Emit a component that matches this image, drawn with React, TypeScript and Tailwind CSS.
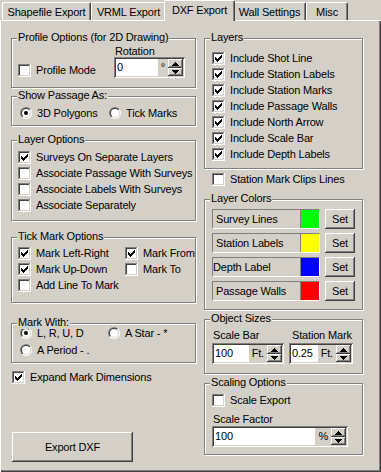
import type { ReactNode } from 'react';

const raised =
  'bg-[#d4d0c8] shadow-[inset_-1px_-1px_0_#404040,inset_1px_1px_0_#fff,inset_-2px_-2px_0_#808080,inset_2px_2px_0_#d4d0c8]';
const sunken =
  'shadow-[inset_1px_1px_0_#808080,inset_-1px_-1px_0_#fff,inset_2px_2px_0_#404040,inset_-2px_-2px_0_#d4d0c8]';

// column offsets of the classic 7x7 check glyph
const CHECK: [number, number][] = [
  [0, 2],
  [1, 3],
  [2, 4],
  [3, 3],
  [4, 2],
  [5, 1],
  [6, 0],
];

function CheckBox({ checked }: { checked?: boolean }) {
  return (
    <svg width="13" height="13" viewBox="0 0 13 13" shapeRendering="crispEdges" className="shrink-0">
      <rect x="0" y="0" width="13" height="13" fill="#fff" />
      <rect x="0" y="0" width="12" height="1" fill="#808080" />
      <rect x="0" y="0" width="1" height="12" fill="#808080" />
      <rect x="1" y="1" width="10" height="1" fill="#404040" />
      <rect x="1" y="1" width="1" height="10" fill="#404040" />
      <rect x="1" y="11" width="11" height="1" fill="#d4d0c8" />
      <rect x="11" y="1" width="1" height="11" fill="#d4d0c8" />
      {checked &&
        CHECK.map(([x, y]) => <rect key={x} x={3 + x} y={3 + y} width="1" height="3" fill="#000" />)}
    </svg>
  );
}

function RadioDot({ checked }: { checked?: boolean }) {
  return (
    <svg width="12" height="12" viewBox="0 0 12 12" className="shrink-0">
      <defs>
        <linearGradient id="rOuter" x1="0" y1="0" x2="1" y2="1">
          <stop offset="0.5" stopColor="#808080" />
          <stop offset="0.5" stopColor="#ffffff" />
        </linearGradient>
        <linearGradient id="rInner" x1="0" y1="0" x2="1" y2="1">
          <stop offset="0.5" stopColor="#404040" />
          <stop offset="0.5" stopColor="#d4d0c8" />
        </linearGradient>
      </defs>
      <circle cx="6" cy="6" r="6" fill="url(#rOuter)" />
      <circle cx="6" cy="6" r="5" fill="url(#rInner)" />
      <circle cx="6" cy="6" r="4" fill="#fff" />
      {checked && <circle cx="6" cy="6" r="2" fill="#000" />}
    </svg>
  );
}

function Check({ label, checked = false, className = '' }: { label: string; checked?: boolean; className?: string }) {
  return (
    <div className={`flex h-[13px] items-center gap-[5px] whitespace-nowrap leading-[13px] ${className}`}>
      <CheckBox checked={checked} />
      <span>{label}</span>
    </div>
  );
}

function Radio({ label, checked = false }: { label: string; checked?: boolean }) {
  return (
    <div className="flex h-[12px] items-center gap-[5px] whitespace-nowrap leading-[12px]">
      <RadioDot checked={checked} />
      <span>{label}</span>
    </div>
  );
}

function Group({ label, className = '', children }: { label: string; className?: string; children?: ReactNode }) {
  return (
    <div className={`relative border border-[#808080] shadow-[1px_1px_0_#fff,inset_1px_1px_0_#fff] ${className}`}>
      <span className="absolute -top-[8px] left-[5px] bg-[#d4d0c8] px-[1px] leading-[13px] whitespace-nowrap">
        {label}
      </span>
      {children}
    </div>
  );
}

function Arrow({ up }: { up?: boolean }) {
  return (
    <svg width="7" height="4" viewBox="0 0 7 4" shapeRendering="crispEdges">
      {up ? (
        <>
          <rect x="3" y="0" width="1" height="1" />
          <rect x="2" y="1" width="3" height="1" />
          <rect x="1" y="2" width="5" height="1" />
          <rect x="0" y="3" width="7" height="1" />
        </>
      ) : (
        <>
          <rect x="0" y="0" width="7" height="1" />
          <rect x="1" y="1" width="5" height="1" />
          <rect x="2" y="2" width="3" height="1" />
          <rect x="3" y="3" width="1" height="1" />
        </>
      )}
    </svg>
  );
}

function SpinField({ value, unit, className = '' }: { value: string; unit?: string; className?: string }) {
  return (
    <div className={`flex h-[21px] bg-white p-[2px] ${sunken} ${className}`}>
      <span className="flex-1 pl-[1px] leading-[17px]">{value}</span>
      {unit && <span className="bg-[#d4d0c8] px-[3px] leading-[17px]">{unit}</span>}
      <div className="flex w-[15px] flex-col">
        <div className={`flex h-[9px] items-center justify-center ${raised}`}>
          <Arrow up />
        </div>
        <div className={`flex h-[8px] items-center justify-center ${raised}`}>
          <Arrow />
        </div>
      </div>
    </div>
  );
}

function ColorRow({ label, swatch, tight }: { label: string; swatch: string; tight?: boolean }) {
  return (
    <div className="flex gap-[5px]">
      <div className="flex h-[20px] w-[108px] border border-[#808080] border-r-white border-b-white">
        <span className={`flex-1 leading-[18px] ${tight ? 'pl-0' : 'pl-[3px]'}`}>{label}</span>
        <span className={`w-[19px] border-l border-[#808080] ${swatch}`} />
      </div>
      <button className={`h-[20px] w-[30px] leading-[20px] ${raised}`}>Set</button>
    </div>
  );
}

export default function App() {
  return (
    <div className="flex h-[472px] w-[381px] flex-col bg-[#d4d0c8] font-['Liberation_Sans',Arial,sans-serif] text-[11px] tracking-[-0.17px] text-black">
      {/* tab strip */}
      <div className="relative z-10 flex h-[20px] items-start pl-[2px]">
        <div className="mt-[2px] flex h-[18px] w-[89px] items-center justify-center rounded-t-[2px] border-t border-l border-r border-white border-r-[#404040] pt-[1px] shadow-[inset_-1px_0_0_#808080]">
          Shapefile Export
        </div>
        <div className="mt-[2px] flex h-[18px] w-[75px] items-center justify-center rounded-t-[2px] border-t border-l border-r border-white border-r-[#404040] pt-[1px] shadow-[inset_-1px_0_0_#808080]">
          VRML Export
        </div>
        <div className="relative z-10 -mx-[2px] flex h-[21px] w-[71px] items-center justify-center rounded-t-[2px] border-t border-l border-r border-white border-r-[#404040] bg-[#d4d0c8] pb-[1px] shadow-[inset_-1px_0_0_#808080]">
          DXF Export
        </div>
        <div className="mt-[2px] flex h-[18px] w-[73px] items-center justify-center rounded-t-[2px] border-t border-l border-r border-white border-r-[#404040] pt-[1px] shadow-[inset_-1px_0_0_#808080]">
          Wall Settings
        </div>
        <div className="mt-[2px] flex h-[18px] w-[42px] items-center justify-center rounded-t-[2px] border-t border-l border-r border-white border-r-[#404040] pt-[1px] shadow-[inset_-1px_0_0_#808080]">
          Misc
        </div>
      </div>

      {/* panel */}
      <div className="flex flex-1 gap-[8px] pl-[11px] pt-[18px] shadow-[inset_1px_1px_0_#fff,inset_-1px_-1px_0_#404040,inset_-2px_-2px_0_#808080]">
        {/* left column */}
        <div className="flex w-[185px] flex-col">
          <Group label="Profile Options (for 2D Drawing)" className="h-[50px]">
            <div className="flex pl-[6px] pt-[6px]">
              <Check label="Profile Mode" className="mt-[19px]" />
              <div className="ml-auto mr-[10px] flex w-[71px] flex-col">
                <span className="h-[12px] pl-[1px] leading-[12px]">Rotation</span>
                <SpinField value="0" unit="°" />
              </div>
            </div>
          </Group>

          <Group label="Show Passage As:" className="mt-[8px] h-[30px]">
            <div className="grid grid-cols-[89px_1fr] pl-[8px] pt-[10px]">
              <Radio label="3D Polygons" checked />
              <Radio label="Tick Marks" />
            </div>
          </Group>

          <Group label="Layer Options" className="mt-[14px] h-[81px]">
            <div className="flex flex-col gap-[3px] pl-[6px] pt-[10px]">
              <Check label="Surveys On Separate Layers" checked />
              <Check label="Associate Passage With Surveys" />
              <Check label="Associate Labels With Surveys" />
              <Check label="Associate Separately" />
            </div>
          </Group>

          <Group label="Tick Mark Options" className="mt-[16px] h-[66px]">
            <div className="grid grid-cols-[107px_1fr] gap-y-[3px] pl-[6px] pt-[9px]">
              <Check label="Mark Left-Right" checked />
              <Check label="Mark From" checked />
              <Check label="Mark Up-Down" checked />
              <Check label="Mark To" />
              <Check label="Add Line To Mark" />
            </div>
          </Group>

          <Group label="Mark With:" className="mt-[20px] h-[40px]">
            <div className="grid grid-cols-[88px_1fr] gap-y-[5px] pl-[8px] pt-[3px]">
              <Radio label="L, R, U, D" checked />
              <Radio label="A Star - *" />
              <Radio label="A Period - ." />
            </div>
          </Group>

          <Check label="Expand Mark Dimensions" checked className="ml-[1px] mt-[8px]" />

          <button className={`ml-[1px] mt-[48px] h-[30px] w-[121px] ${raised}`}>Export DXF</button>
        </div>

        {/* right column */}
        <div className="flex w-[159px] flex-col">
          <Group label="Layers" className="h-[131px]">
            <div className="flex flex-col gap-[3px] pl-[7px] pt-[13px]">
              <Check label="Include Shot Line" checked />
              <Check label="Include Station Labels" checked />
              <Check label="Include Station Marks" checked />
              <Check label="Include Passage Walls" checked />
              <Check label="Include North Arrow" checked />
              <Check label="Include Scale Bar" checked />
              <Check label="Include Depth Labels" checked />
            </div>
          </Group>

          <Check label="Station Mark Clips Lines" className="ml-[8px] mt-[4px]" />

          <Group label="Layer Colors" className="mt-[13px] h-[111px]">
            <div className="flex flex-col gap-[4px] pl-[7px] pt-[9px]">
              <ColorRow label="Survey Lines" swatch="bg-[#00ff00]" />
              <ColorRow label="Station Labels" swatch="bg-[#ffff00]" />
              <ColorRow label="Depth Label" swatch="bg-[#0000ff]" tight />
              <ColorRow label="Passage Walls" swatch="bg-[#ff0000]" />
            </div>
          </Group>

          <Group label="Object Sizes" className="mt-[9px] h-[55px]">
            <div className="flex gap-[5px] pl-[7px] pt-[9px]">
              <div className="flex w-[72px] flex-col">
                <span className="h-[14px] whitespace-nowrap pl-[1px] leading-[13px]">Scale Bar</span>
                <SpinField value="100" unit="Ft." />
              </div>
              <div className="flex w-[64px] flex-col">
                <span className="h-[14px] whitespace-nowrap pl-[3px] leading-[13px]">Station Mark</span>
                <SpinField value="0.25" unit="Ft." />
              </div>
            </div>
          </Group>

          <Group label="Scaling Options" className="mt-[9px] h-[72px]">
            <div className="flex flex-col pl-[7px] pt-[10px]">
              <Check label="Scale Export" />
              <span className="mt-[6px] h-[13px] pl-[1px] leading-[13px]">Scale Factor</span>
              <SpinField value="100" unit="%" className="w-[136px]" />
            </div>
          </Group>
        </div>
      </div>
    </div>
  );
}
